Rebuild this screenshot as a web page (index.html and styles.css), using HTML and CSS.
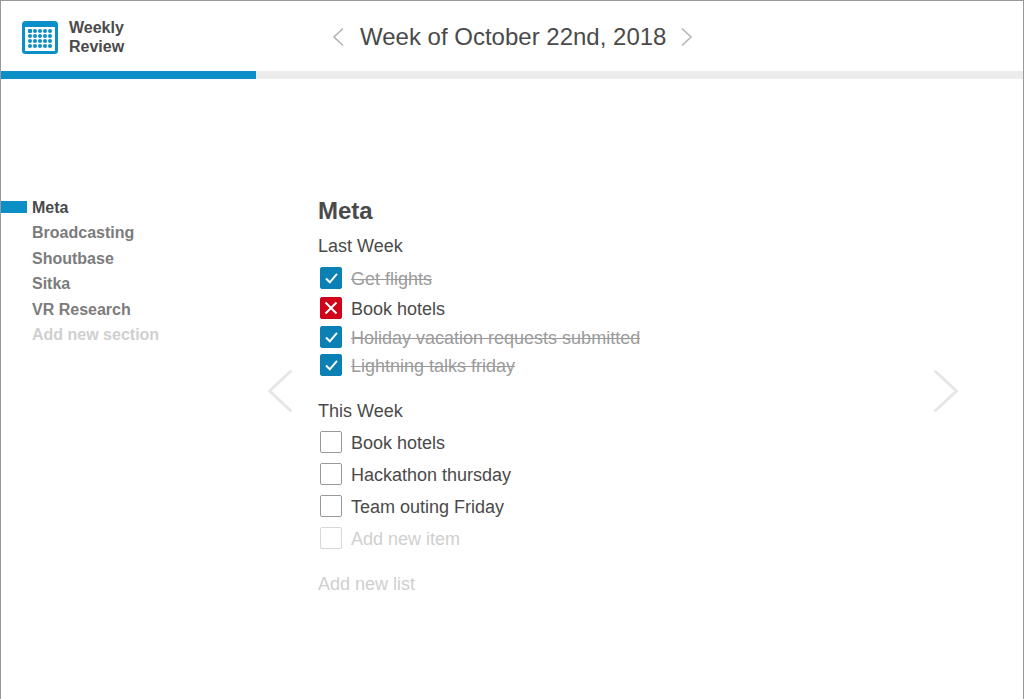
FILE: index.html
```html
<!DOCTYPE html>
<html lang="en">
<head>
  <meta charset="UTF-8">
  <meta name="viewport" content="width=device-width, initial-scale=1.0">
  <title>Weekly Review</title>
  <link rel="stylesheet" href="styles.css">
</head>
<body>
  <div class="frame">

    <!-- Top bar -->
    <header class="topbar">
      <div class="brand">
        <svg class="brand-icon" width="36" height="33" viewBox="0 0 36 33">
          <rect x="1.5" y="1.5" width="33" height="30" rx="2" fill="#fff" stroke="#0a8fc6" stroke-width="3"/>
          <rect x="3" y="3" width="30" height="3" fill="#0a8fc6"/>
          <g fill="#0a8fc6">
            <rect x="6" y="8" width="4" height="4" rx="1"/>
            <circle cx="13" cy="10" r="2"/><circle cx="18" cy="10" r="2"/><circle cx="23" cy="10" r="2"/><circle cx="28" cy="10" r="2"/>
            <circle cx="8" cy="15" r="2"/><circle cx="13" cy="15" r="2"/><circle cx="18" cy="15" r="2"/><circle cx="23" cy="15" r="2"/><circle cx="28" cy="15" r="2"/>
            <circle cx="8" cy="20" r="2"/><circle cx="13" cy="20" r="2"/><circle cx="18" cy="20" r="2"/><circle cx="23" cy="20" r="2"/><circle cx="28" cy="20" r="2"/>
            <circle cx="8" cy="25" r="2"/><circle cx="13" cy="25" r="2"/><circle cx="18" cy="25" r="2"/><circle cx="23" cy="25" r="2"/><circle cx="28" cy="25" r="2"/>
          </g>
        </svg>
        <div class="brand-name">Weekly<br>Review</div>
      </div>
      <div class="week-nav">
        <svg width="12" height="20" viewBox="0 0 12 20"><path d="M10 1.5 L1 10 L10 18.5" class="chevron"/></svg>
        <span class="week-title">Week of October 22nd, 2018</span>
        <svg width="12" height="20" viewBox="0 0 12 20"><path d="M1 1.5 L10 10 L1 18.5" class="chevron"/></svg>
      </div>
    </header>

    <div class="progress"><div class="progress-fill"></div></div>

    <div class="review">

      <!-- Sections -->
      <nav class="sections">
        <a class="section-link active">Meta</a>
        <a class="section-link">Broadcasting</a>
        <a class="section-link">Shoutbase</a>
        <a class="section-link">Sitka</a>
        <a class="section-link">VR Research</a>
        <a class="section-link add">Add new section</a>
      </nav>

      <svg class="page-arrow" width="26" height="44" viewBox="0 0 26 44"><path d="M23.5 2.5 L2.5 22 L23.5 41.5"/></svg>

      <main class="content">
        <h2>Meta</h2>

        <h3>Last Week</h3>
        <ul class="items tight">
          <li class="item done tall">
            <span class="box checked"><svg width="22" height="22" viewBox="0 0 22 22"><path d="M6 11.5 L9.8 15.3 L17 6.8"/></svg></span>
            <span class="item-text">Get flights</span>
          </li>
          <li class="item failed tall">
            <span class="box crossed"><svg width="22" height="22" viewBox="0 0 22 22"><path d="M5.5 5.5 L16.5 16.5 M16.5 5.5 L5.5 16.5"/></svg></span>
            <span class="item-text">Book hotels</span>
          </li>
          <li class="item done">
            <span class="box checked"><svg width="22" height="22" viewBox="0 0 22 22"><path d="M6 11.5 L9.8 15.3 L17 6.8"/></svg></span>
            <span class="item-text">Holiday vacation requests submitted</span>
          </li>
          <li class="item done">
            <span class="box checked"><svg width="22" height="22" viewBox="0 0 22 22"><path d="M6 11.5 L9.8 15.3 L17 6.8"/></svg></span>
            <span class="item-text">Lightning talks friday</span>
          </li>
        </ul>

        <h3 class="next-list">This Week</h3>
        <ul class="items">
          <li class="item"><span class="box"></span><span class="item-text">Book hotels</span></li>
          <li class="item"><span class="box"></span><span class="item-text">Hackathon thursday</span></li>
          <li class="item"><span class="box"></span><span class="item-text">Team outing Friday</span></li>
          <li class="item add"><span class="box"></span><span class="item-text">Add new item</span></li>
        </ul>

        <div class="add-list">Add new list</div>
      </main>

      <svg class="page-arrow" width="26" height="44" viewBox="0 0 26 44"><path d="M2.5 2.5 L23.5 22 L2.5 41.5"/></svg>
    </div>

  </div>
</body>
</html>
```

FILE: styles.css
```css
* {
  box-sizing: border-box;
}
body {
  margin: 0;
  font-family: "Liberation Sans", Arial, sans-serif;
  color: #4a4a4a;
  background-color: #fff;
}
.frame {
  height: 699px;
  border: 1px solid #999;
  border-bottom: 0;
  overflow: hidden;
}

.topbar {
  display: flex;
  align-items: center;
  height: 70px;
  padding-left: 21px;
}
.brand {
  display: flex;
  align-items: center;
  gap: 11px;
  width: 311px;
  margin-top: 2px;
}
.brand-icon {
  flex: none;
}
.brand-name {
  font-size: 16px;
  line-height: 19px;
  font-weight: bold;
}
.week-nav {
  display: flex;
  align-items: center;
  gap: 15px;
  margin-top: 2px;
}
.week-title {
  font-size: 24px;
  line-height: 28px;
}
.chevron {
  fill: none;
  stroke: #b5b5b5;
  stroke-width: 1.6;
}

.progress {
  height: 8px;
  margin-left: -1px;
  margin-right: -1px;
  background-color: #ececec;
}
.progress-fill {
  width: 256px;
  height: 8px;
  background-color: #0a8fc6;
}

.review {
  display: grid;
  grid-template-columns: 266px 51px 615px 26px;
  padding-top: 116px;
}

.sections {
  display: flex;
  flex-direction: column;
}
.section-link {
  display: flex;
  align-items: center;
  height: 25.5px;
  padding-left: 31px;
  font-size: 16px;
  font-weight: bold;
  color: #7c7c7c;
}
.section-link.active {
  position: relative;
  color: #4a4a4a;
}
.section-link.active::before {
  content: "";
  position: absolute;
  left: 0;
  top: 6px;
  width: 26px;
  height: 12px;
  background-color: #0a8fc6;
}
.section-link.add {
  color: #cfcfcf;
}

.page-arrow {
  margin-top: 174px;
}
.page-arrow path {
  fill: none;
  stroke: #e6e6e6;
  stroke-width: 3;
  stroke-linecap: round;
  stroke-linejoin: round;
}

.content {
  padding-top: 2px;
}
h2 {
  margin: 0;
  font-size: 24px;
  line-height: 28px;
  font-weight: bold;
}
h3 {
  margin: 10px 0 0;
  font-size: 18px;
  line-height: 22px;
  font-weight: normal;
}
h3.next-list {
  margin-top: 21px;
}

.items {
  list-style: none;
  margin: 4px 0 0;
  padding: 0;
}
.items.tight {
  margin-top: 6px;
}
.item {
  display: flex;
  align-items: center;
  gap: 9px;
  height: 32px;
  padding-left: 2px;
  font-size: 18px;
}
.tight .item {
  height: 28px;
}
.tight .item.tall {
  height: 30px;
}
.item-text {
  padding-top: 2px;
}
.box {
  flex: none;
  width: 22px;
  height: 22px;
  border: 1px solid #999;
  border-radius: 2px;
  background-color: #fff;
}
.box svg {
  display: block;
  margin: -1px;
  fill: none;
  stroke: #fff;
  stroke-width: 2;
}
.box.checked {
  background-color: #0a80b4;
  border-color: #0a80b4;
}
.box.crossed {
  background-color: #d0021b;
  border-color: #d0021b;
}
.item.done {
  color: #9b9b9b;
  text-decoration: line-through;
}
.item.add {
  color: #cfcfcf;
}
.item.add .box {
  border-color: #d8d8d8;
}
.add-list {
  margin-top: 19px;
  font-size: 18px;
  line-height: 22px;
  color: #cfcfcf;
}
```
